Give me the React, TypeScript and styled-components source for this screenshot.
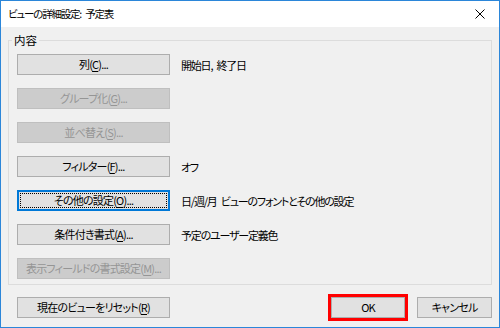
import styled, { createGlobalStyle } from 'styled-components'

const GlobalStyle = createGlobalStyle`
  html, body {
    margin: 0;
    padding: 0;
    background: #ffffff;
  }
  body {
    font-family: "Noto Sans CJK JP", "Noto Sans", sans-serif;
    font-size: 11px;
    -webkit-font-smoothing: antialiased;
  }
`

const Window = styled.div`
  box-sizing: border-box;
  width: 500px;
  height: 328px;
  border: 1px solid #2b86d9;
  display: flex;
  flex-direction: column;
  background: #f0f0f0;
`

const TitleBar = styled.div`
  height: 26px;
  flex-shrink: 0;
  background: #ffffff;
  display: flex;
  align-items: center;
  justify-content: space-between;
  padding: 0 14px 0 7px;
`

const Title = styled.span`
  font-size: 10.5px;
  letter-spacing: -1.2px;
  word-spacing: 3px;
  color: #000000;
  font-feature-settings: 'palt';
  line-height: 1;
`

const CloseIcon = styled.svg`
  width: 10px;
  height: 10px;
  display: block;
`

const Body = styled.div`
  flex: 1;
  display: flex;
  flex-direction: column;
  padding: 5px 7px 8px;
`

const Group = styled.fieldset`
  margin: 0;
  padding: 6px 8px 5px;
  border: 1px solid #dcdcdc;
  display: flex;
  flex-direction: column;
  gap: 13px;
`

const Legend = styled.legend`
  padding: 0 2px;
  margin-left: -5px;
  font-size: 11.5px;
  line-height: 16px;
  color: #000000;
`

const Row = styled.div`
  display: flex;
  align-items: center;
  gap: 11px;
  height: 21px;
`

const Button = styled.button<{ $width?: number; $focused?: boolean; $marked?: boolean }>`
  position: relative;
  box-sizing: border-box;
  width: ${(p) => p.$width ?? 153}px;
  height: 21px;
  padding: 0;
  flex-shrink: 0;
  font-family: inherit;
  font-size: 11px;
  letter-spacing: -0.8px;
  font-feature-settings: 'palt';
  line-height: 1;
  white-space: nowrap;
  color: #000000;
  background: #e1e1e1;
  border: ${(p) => (p.$focused ? '2px solid #0078d7' : '1px solid #adadad')};
  outline: ${(p) => (p.$marked ? '3px solid #ff0000' : 'none')};
  display: flex;
  align-items: center;
  justify-content: center;

  &:disabled {
    background: #cccccc;
    border-color: #bfbfbf;
    color: #959595;
  }

  ${(p) =>
    p.$focused &&
    `
    &::after {
      content: '';
      position: absolute;
      inset: 1px;
      border: 1px dotted #000000;
    }
  `}
`

const Key = styled.u`
  text-underline-offset: 2px;
`

const Label = styled.span`
  font-size: 11px;
  letter-spacing: -1.2px;
  word-spacing: 3px;
  font-feature-settings: 'palt';
  color: #000000;
  white-space: nowrap;
`

const Footer = styled.div`
  display: flex;
  align-items: center;
  gap: 12px;
  margin-top: 12px;
  padding-left: 9px;
`

const Spacer = styled.div`
  flex: 1;
`

interface OptionRow {
  text: string
  key: string
  label?: string
  disabled?: boolean
  focused?: boolean
}

const rows: OptionRow[] = [
  { text: '列', key: 'C', label: '開始日, 終了日' },
  { text: 'グループ化', key: 'G', disabled: true },
  { text: '並べ替え', key: 'S', disabled: true },
  { text: 'フィルター', key: 'F', label: 'オフ' },
  { text: 'その他の設定', key: 'O', label: '日/週/月 ビューのフォントとその他の設定', focused: true },
  { text: '条件付き書式', key: 'A', label: '予定のユーザー定義色' },
  { text: '表示フィールドの書式設定', key: 'M', disabled: true },
]

export default function App() {
  return (
    <>
      <GlobalStyle />
      <Window>
        <TitleBar>
          <Title>ビューの詳細設定: 予定表</Title>
          <CloseIcon viewBox="0 0 10 10">
            <path d="M0.5 0.5 L9.5 9.5 M9.5 0.5 L0.5 9.5" stroke="#000" strokeWidth="1" fill="none" />
          </CloseIcon>
        </TitleBar>
        <Body>
          <Group>
            <Legend>内容</Legend>
            {rows.map((r) => (
              <Row key={r.key}>
                <Button disabled={r.disabled} $focused={r.focused}>
                  {r.text}(<Key>{r.key}</Key>)...
                </Button>
                {r.label && <Label>{r.label}</Label>}
              </Row>
            ))}
          </Group>
          <Footer>
            <Button>
              現在のビューをリセット(<Key>R</Key>)
            </Button>
            <Spacer />
            <Button $width={74} $marked>
              OK
            </Button>
            <Button $width={75}>キャンセル</Button>
          </Footer>
        </Body>
      </Window>
    </>
  )
}
